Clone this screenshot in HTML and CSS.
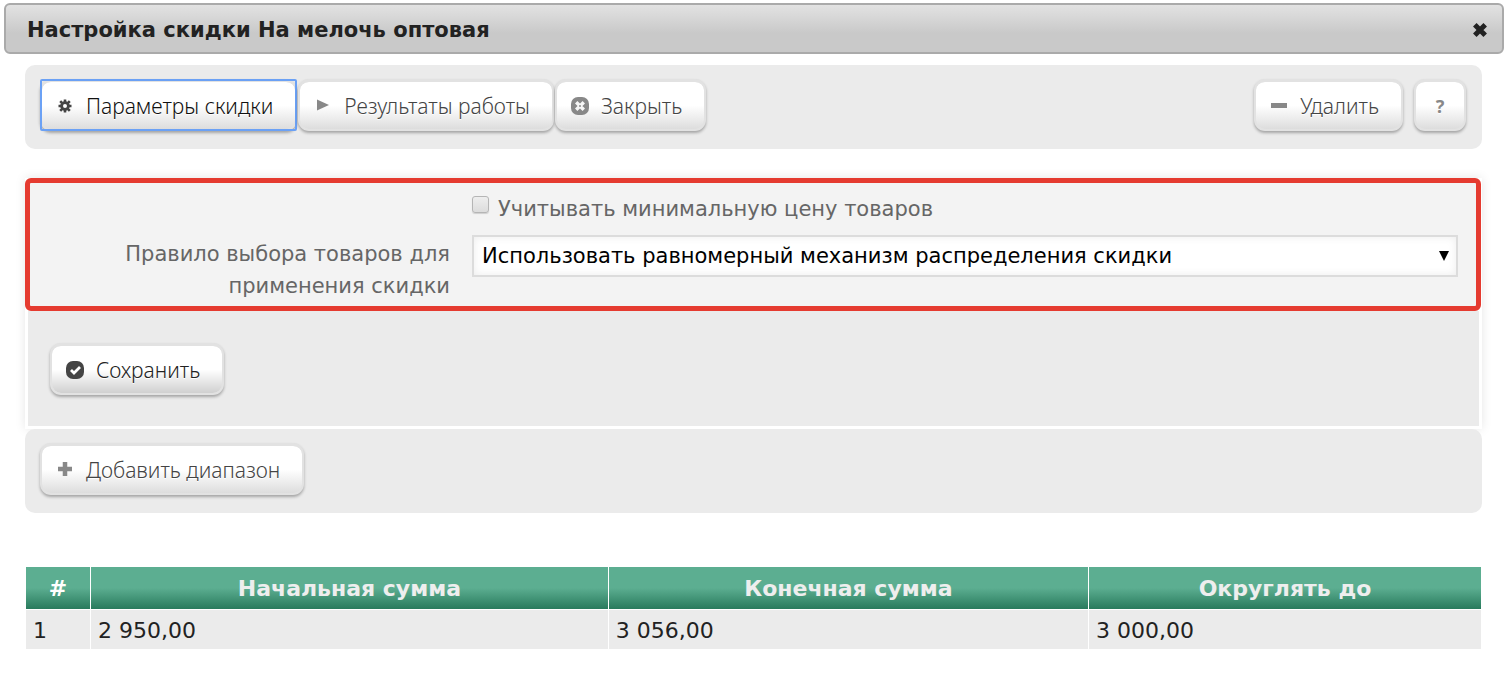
FILE: index.html
```html
<!DOCTYPE html>
<html lang="ru">
<head>
  <meta charset="UTF-8" />
  <meta name="viewport" content="width=device-width, initial-scale=1.0"/>
  <title>Настройка скидки</title>
  <link rel="stylesheet" href="styles.css">
</head>
<body>

<header class="titlebar">
  <h1>Настройка скидки На мелочь оптовая</h1>
  <button class="close" type="button" aria-label="Закрыть окно">
    <svg width="16" height="16" viewBox="0 0 16 16"><path d="M2.800 2.800L13.200 13.200M13.200 2.800L2.800 13.200" stroke="#222" stroke-width="5"/></svg>
  </button>
</header>

<main class="content">
  <div class="toolbar">
    <button class="btn active" type="button">
      <svg class="icon" width="18" height="18" viewBox="0 0 18 18">
        <g stroke="#444" stroke-width="2.600"><path d="M9 2.500V5M9 13V15.500M2.500 9H5M13 9H15.500M4.200 4.200L6.200 6.200M11.800 11.800L13.800 13.800M13.800 4.200L11.800 6.200M6.200 11.800L4.200 13.800"/></g>
        <circle cx="9" cy="9" r="3.400" fill="none" stroke="#444" stroke-width="2.800"/>
      </svg>
      Параметры скидки
    </button>
    <button class="btn" type="button">
      <svg class="icon" width="18" height="18" viewBox="0 0 18 18"><path d="M3 2.500L15 8L3 13.500Z" fill="#888"/></svg>
      Результаты работы
    </button>
    <button class="btn" type="button">
      <svg class="icon" width="18" height="18" viewBox="0 0 18 18"><rect width="18" height="18" rx="7" fill="#888"/><path d="M5.200 5.200L12.800 12.800M12.800 5.200L5.200 12.800" stroke="#f6f6f6" stroke-width="3.400"/><circle cx="9" cy="9" r="1" fill="#888"/></svg>
      Закрыть
    </button>
    <button class="btn right" type="button">
      <svg class="icon" width="18" height="18" viewBox="0 0 18 18"><rect x="1" y="6" width="16" height="5" fill="#888"/></svg>
      Удалить
    </button>
    <button class="btn help" type="button">?</button>
  </div>

  <form class="panel">
    <div class="rules">
      <div class="field">
        <input type="checkbox" id="minPrice"/>
        <label for="minPrice">Учитывать минимальную цену товаров</label>
      </div>
      <label class="caption" for="rule">Правило выбора товаров для применения скидки</label>
      <div class="select">
        <select id="rule">
          <option>Использовать равномерный механизм распределения скидки</option>
        </select>
        <svg class="arrow" width="10" height="10" viewBox="0 0 10 10"><path d="M0 0H10L5 10Z" fill="#000"/></svg>
      </div>
    </div>
    <div class="actions">
      <button class="btn save" type="button">
        <svg class="icon" width="18" height="18" viewBox="0 0 18 18"><rect width="18" height="18" rx="7" fill="#444"/><path d="M5 9L8 12L14 6" fill="none" stroke="#fff" stroke-width="2.800"/></svg>
        Сохранить
      </button>
    </div>
  </form>

  <div class="toolbar">
    <button class="btn" type="button">
      <svg class="icon" width="18" height="18" viewBox="0 0 18 18"><path d="M9 1V15M2 8H16" stroke="#888" stroke-width="4.500"/></svg>
      Добавить диапазон
    </button>
  </div>

  <table class="ranges">
    <thead>
      <tr>
        <th class="num">#</th>
        <th>Начальная сумма</th>
        <th class="to">Конечная сумма</th>
        <th class="round">Округлять до</th>
      </tr>
    </thead>
    <tbody>
      <tr>
        <td>1</td>
        <td>2 950,00</td>
        <td>3 056,00</td>
        <td>3 000,00</td>
      </tr>
    </tbody>
  </table>
</main>

</body>
</html>
```

FILE: styles.css
```css
* {
  box-sizing: border-box;
}

body {
  font-family: "DejaVu Sans", Verdana, sans-serif;
  font-size: 21px;
  color: #222;
  background-color: #fff;
  margin: 0;
  padding: 3px 4px;
}

.titlebar {
  display: flex;
  align-items: center;
  justify-content: space-between;
  height: 51px;
  padding: 2px 14px 0 21px;
  border: 2px solid #aaa;
  border-radius: 6px;
  background: linear-gradient(#e2e2e2, #c9c9c9 60%, #c9c9c9);
}

h1 {
  margin: 0;
  font-size: 21px;
}

.close {
  display: flex;
  padding: 0;
  border: 0;
  background: none;
  cursor: pointer;
}

.content {
  padding: 11px 22px 0 21px;
}

.toolbar {
  display: flex;
  align-items: flex-start;
  gap: 1px;
  height: 84px;
  padding: 14px 16px 0 15px;
  border-radius: 10px;
  background: #ebebeb;
}

.btn {
  position: relative;
  display: inline-flex;
  align-items: center;
  gap: 12px;
  height: 52px;
  padding: 0 22px 0 14px;
  border: 2px solid #e2e2e2;
  border-top-width: 3px;
  border-radius: 11px;
  background: linear-gradient(#fff 50%, #ddd) padding-box, #e2e2e2;
  box-shadow: 0 2px 3px rgba(0, 0, 0, 0.3);
  color: #444;
  font-family: "Noto Sans", "Segoe UI", sans-serif;
  font-size: 21px;
  font-weight: 300;
  text-shadow: 0 1px 0 #fff;
  white-space: nowrap;
  cursor: pointer;
}

.active {
  color: #111;
  outline: none;
}

/* square focus ring over the rounded button */
.active::after {
  content: "";
  position: absolute;
  inset: -3px -2px -2px;
  border: 2px solid #6ba1f5;
  border-radius: 2px;
}

.right {
  margin-left: auto;
}

.help {
  justify-content: center;
  width: 52px;
  margin-left: 10px;
  padding: 0;
  color: #888;
  font-size: 18px;
  font-weight: bold;
}

.panel {
  margin-top: 29px;
  box-shadow: 0 0 10px rgba(0, 0, 0, 0.1);
}

.rules {
  display: grid;
  grid-template-columns: 420px 1fr;
  grid-template-rows: 42px 1fr;
  column-gap: 22px;
  height: 133px;
  margin-right: 1px;
  padding: 10px 18px 0 0;
  border: 5px solid #e53b30;
  border-radius: 6px;
  background: #f3f3f3;
  color: #666;
  line-height: 32px;
}

.field {
  grid-column: 2;
  display: flex;
  gap: 9px;
}

.field input {
  appearance: none;
  width: 17px;
  height: 17px;
  margin: 3px 0 0;
  border: 1px solid #b5b5b5;
  border-radius: 3px;
  background: linear-gradient(#eee, #dcdcdc);
  box-shadow: 0 1px 1px rgba(0, 0, 0, 0.15);
}

.caption {
  padding-top: 3px;
  text-align: right;
}

.select {
  position: relative;
}

.select select {
  appearance: none;
  width: 100%;
  height: 42px;
  padding: 0 8px;
  border: 2px solid #dcdcdc;
  border-radius: 0;
  background: #fff;
  box-shadow: inset 0 0 8px rgba(0, 0, 0, 0.08);
  color: #000;
  font: inherit;
}

.arrow {
  position: absolute;
  top: 16px;
  right: 9px;
  pointer-events: none;
}

.actions {
  height: 118px;
  padding: 32px 22px 0;
  border: 3px solid #fff;
  border-top: 0;
  background: #ebebeb;
}

.save {
  background: linear-gradient(#fff 50%, #d0d0d0) padding-box, #e2e2e2;
  color: #222;
}

.ranges {
  width: 100%;
  margin-top: 53px;
  border-spacing: 1px;
  table-layout: fixed;
  font-size: 22px;
}

.ranges th {
  height: 42px;
  padding: 0 7px;
  background: linear-gradient(#5cae91 50%, #287a5c);
  color: #eee;
}

.ranges td {
  height: 39px;
  padding: 2px 7px 0;
  background: #ebebeb;
}

.ranges .num {
  width: 64px;
  color: #fff;
}

.ranges .to {
  width: 33%;
}

.ranges .round {
  width: 27%;
}
```
